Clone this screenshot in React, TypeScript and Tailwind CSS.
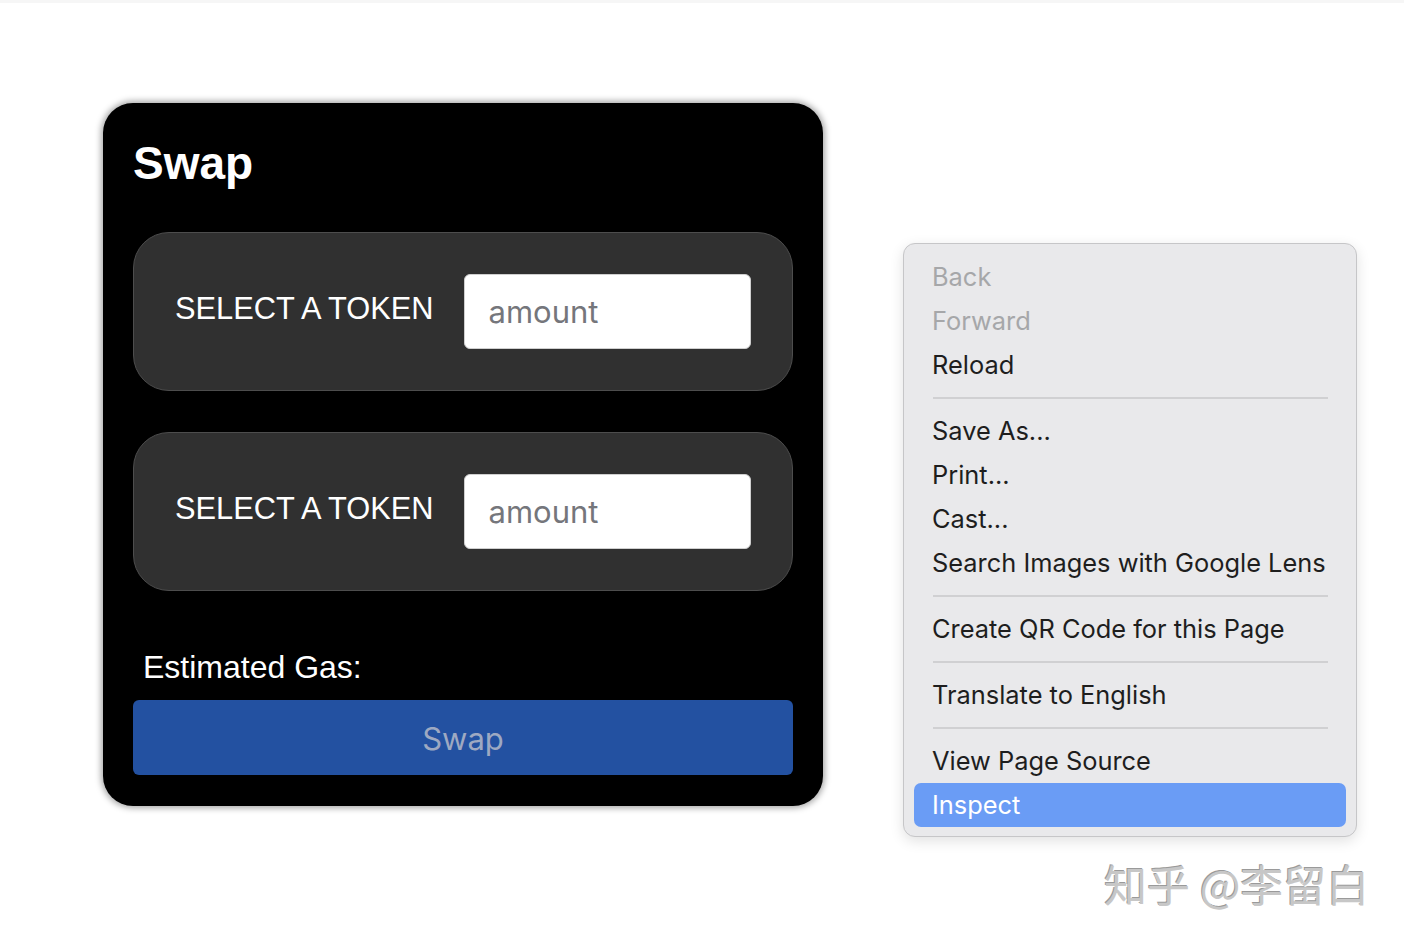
import React from "react";

const items: Array<{ label: string; disabled?: boolean; sepBefore?: boolean; active?: boolean }> = [
  { label: "Back", disabled: true },
  { label: "Forward", disabled: true },
  { label: "Reload" },
  { label: "Save As...", sepBefore: true },
  { label: "Print..." },
  { label: "Cast..." },
  { label: "Search Images with Google Lens" },
  { label: "Create QR Code for this Page", sepBefore: true },
  { label: "Translate to English", sepBefore: true },
  { label: "View Page Source", sepBefore: true },
  { label: "Inspect", active: true },
];

function TokenPanel() {
  return (
    <div className="flex h-[159px] items-center gap-[31px] rounded-[36px] border border-[#4d4d4d] bg-[#303030] px-[41px]">
      <span className="text-[30.8px] leading-none text-white whitespace-nowrap pb-[4px]">SELECT A TOKEN</span>
      <input
        placeholder="amount"
        className="h-[75px] w-[287px] rounded-[6px] border border-[#cfcfcf] bg-white pl-[23px] text-[31px] text-[#222] placeholder:text-[#75767b] outline-none"
        style={{ fontFamily: "Inter, 'Liberation Sans', sans-serif" }}
      />
    </div>
  );
}

export default function App() {
  return (
    <div className="relative h-[942px] w-[1404px] overflow-hidden bg-white" style={{ fontFamily: "'Liberation Sans', Arial, sans-serif" }}>
      <div className="h-[3px] bg-[#f6f6f6]" />
      <div className="pl-[103px] pt-[100px]">
        <div className="flex h-[703px] w-[720px] flex-col rounded-[30px] bg-black px-[30px] pb-[31px] shadow-[0_0_6px_2px_rgba(0,0,0,0.35)]">
          <h1 className="mt-[37px] text-[46px] font-bold leading-none text-white">Swap</h1>
          <div className="mt-[46px] flex flex-col gap-[41px]">
            <TokenPanel />
            <TokenPanel />
          </div>
          <div className="flex flex-1 items-center pl-[10px] pt-[43px]">
            <span className="text-[32px] leading-none text-white">Estimated Gas:</span>
          </div>
          <button
            className="flex h-[75px] w-full items-center justify-center rounded-[6px] bg-[#2351a1] pt-[3px] text-[31px] text-[#9ea9c2]"
            style={{ fontFamily: "Inter, 'Liberation Sans', sans-serif" }}
          >
            Swap
          </button>
        </div>
      </div>

      <div
        className="absolute left-[903px] top-[243px] w-[454px] rounded-[12px] border border-[#c6c6c8] bg-[#e9e9eb] px-[10px] pb-[9px] pt-[11px] shadow-[0_4px_14px_rgba(0,0,0,0.12)]"
        style={{ fontFamily: "Inter, 'Liberation Sans', sans-serif" }}
      >
        {items.map((it) => (
          <React.Fragment key={it.label}>
            {it.sepBefore && (
              <div className="flex h-[22px] items-center pl-[19px] pr-[18px]">
                <div className="h-[2px] w-full bg-[#d0d0d2]" />
              </div>
            )}
            <div
              className={
                "flex h-[44px] items-center rounded-[7px] pl-[18px] text-[25.4px] " +
                (it.active ? "bg-[#6a9cf5] text-white" : it.disabled ? "text-[#a6a7a9]" : "text-[#1e1e1e]")
              }
            >
              {it.label}
            </div>
          </React.Fragment>
        ))}
      </div>

      <div
        className="absolute left-[1104px] top-[862px] text-[43px] leading-none text-[#c7c7c7] [text-shadow:1px_1px_0_#ffffff,-1px_-1px_0_#9a9a9a]"
        style={{ fontFamily: "'Noto Sans CJK SC', 'Liberation Sans', sans-serif" }}
      >
        知乎 @李留白
      </div>
    </div>
  );
}
